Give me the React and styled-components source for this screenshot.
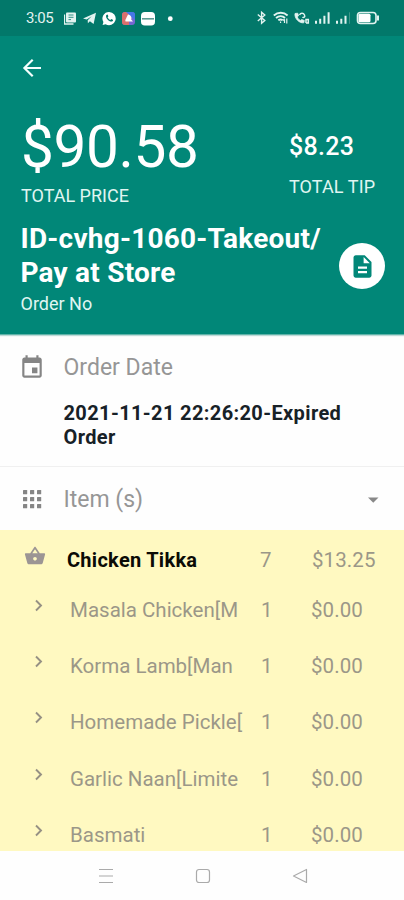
import React from 'react';
import styled, { createGlobalStyle } from 'styled-components';

const Global = createGlobalStyle`
  * { box-sizing: border-box; }
  body { margin: 0; background: #fefefe; font-family: Roboto, "Noto Sans", sans-serif; }
  svg { display: block; flex: none; }
`;

const Screen = styled.div`
  width: 404px;
  height: 900px;
  display: flex;
  flex-direction: column;
  overflow: hidden;
  background: #fefefe;
`;

const StatusBar = styled.div`
  height: 36px;
  flex: none;
  display: flex;
  align-items: center;
  justify-content: space-between;
  padding: 0 24px 0 26px;
  background: #02786a;
  color: #e2f3f0;
`;

const StatusGroup = styled.div`
  display: flex;
  align-items: center;
`;

const Clock = styled.span`
  width: 38px;
  font-size: 15px;
  line-height: 18px;
  letter-spacing: -0.4px;
`;

const Header = styled.header`
  height: 299px;
  flex: none;
  background: #018778;
  color: #fff;
  border-bottom: 1px solid #5fb3a9;
  box-shadow: 0 1px 1px rgba(0, 110, 98, 0.25);
`;

const AppBar = styled.div`
  height: 64px;
  padding: 20px 20px;
`;

const Totals = styled.div`
  display: grid;
  grid-template-columns: 268px 1fr;
  height: 122px;
  padding-left: 21px;
`;

const Total = styled.div`
  padding-top: ${(p) => p.$top}px;
`;

const TotalPrice = styled.div`
  font-size: 58.5px;
  line-height: 70px;
  letter-spacing: -0.4px;
`;

const TotalTip = styled.div`
  font-size: 25px;
  font-weight: 500;
  line-height: 32px;
  letter-spacing: 0.3px;
`;

const Caption = styled.div`
  margin-top: ${(p) => p.$gap || 0}px;
  font-size: 18px;
  line-height: 24px;
  letter-spacing: ${(p) => p.$track || 0}px;
  color: #e0f6f2;
`;

const OrderRow = styled.div`
  display: flex;
  justify-content: space-between;
  padding: 0 19px 0 20.5px;
`;

const OrderTitle = styled.h1`
  margin: 0;
  font-size: 28px;
  font-weight: 700;
  line-height: 34px;
  white-space: nowrap;
  letter-spacing: 0.22px;
`;

const ReceiptButton = styled.button`
  width: 46px;
  height: 46px;
  margin-top: 21px;
  padding: 0;
  border: 0;
  border-radius: 50%;
  display: flex;
  align-items: center;
  justify-content: center;
  background: #fff;
  color: #018778;
`;

const Section = styled.section`
  flex: none;
  height: ${(p) => p.$height}px;
  padding: 18px 19px 0 19px;
  border-bottom: ${(p) => (p.$line ? '1px solid #f0f0f0' : '0')};
`;

const SectionHead = styled.div`
  display: grid;
  grid-template-columns: 44.5px 1fr 22px;
  align-items: center;
  height: 28px;
  color: #858585;
`;

const SectionTitle = styled.div`
  padding-top: 1px;
  font-size: 23px;
  line-height: 28px;
  color: #969696;
`;

const DateValue = styled.div`
  margin: 20px 0 0 44.5px;
  font-size: 20px;
  font-weight: 700;
  line-height: 24px;
  letter-spacing: 0.37px;
  color: #172127;
  white-space: nowrap;
`;

const Items = styled.div`
  flex: none;
  height: 321px;
  overflow: hidden;
  background: #fff9c1;
  color: #9b9788;
`;

const ItemRow = styled.div`
  display: grid;
  grid-template-columns: ${(p) => (p.$main ? '67px 193px 52px 1fr' : '70px 191px 50px 1fr')};
  height: ${(p) => (p.$main ? 52 : 56.2)}px;
  padding-top: ${(p) => (p.$main ? 18 : 16)}px;
  font-size: 20.5px;
  line-height: 24px;
  white-space: nowrap;
`;

const ItemIcon = styled.div`
  padding-left: ${(p) => (p.$main ? 24 : 29)}px;
  margin-top: ${(p) => (p.$main ? -3 : -3)}px;
`;

const ItemName = styled.div`
  ${(p) => p.$main && 'font-weight: 700; font-size: 20px; letter-spacing: 0.28px; color: #0b0b06;'}
`;

const Cell = styled.div`
  letter-spacing: 0.1px;
`;

const NavBar = styled.nav`
  flex: 1;
  display: grid;
  grid-template-columns: repeat(3, 97px);
  justify-content: center;
  justify-items: center;
  align-items: center;
  padding-left: 1px;
  background: #fefefe;
  color: #aaa;
`;

const Notifications = () => (
  <svg width="150" height="16" viewBox="64 10 150 16" fill="currentColor">
    <path d="M64.500 14.500v9.500h9" fill="none" stroke="currentColor" strokeWidth="1.300" />
    <rect x="66" y="12.500" width="10" height="10" rx="1" />
    <path d="M68.500 15h5M68.500 17.300h5M68.500 19.600h2.500" stroke="#02786a" strokeWidth=".8" />
    <path d="M83 18.500 96 12.800 93.600 24l-3.700-2.700-2 2-.2-3 4-4-5 3.300z" />
    <path d="M109 12a6.600 6.600 0 1 1-3.400 12.200l-3 .8.800-3A6.600 6.600 0 0 1 109 12z" fill="#fff" />
    <path d="M106.300 14.900c-1.300 2.800 2.600 7 5.600 6.700.9-.1 1.500-1.500.9-1.900l-1.500-.8-1 1c-1.400-.6-2.200-1.500-2.700-2.700l.8-1-.8-1.600z" fill="#02786a" />
    <rect x="122" y="12" width="13" height="13" rx="3" fill="#7767d2" />
    <path d="M122 15v7a3 3 0 0 0 3 3h4V12h-4a3 3 0 0 0-3 3z" fill="#d9706c" />
    <path d="M126 12h6a3 3 0 0 1 3 3v5z" fill="#4577e8" />
    <path d="M128 14.500c3 .5 4 3 3.200 5l1.800 2h-7.500c-.8-2 1-3 1-4z" fill="#fff" />
    <rect x="141" y="12" width="14" height="13.500" rx="3.800" fill="#fff" />
    <path d="M142 18.800h12" stroke="#5d9c94" strokeWidth="1.600" />
    <circle cx="170.300" cy="18.700" r="2.400" fill="#fff" />
  </svg>
);

const Connectivity = () => (
  <svg width="124" height="16" viewBox="256 11 124 16" fill="none" stroke="currentColor" strokeWidth="1.400">
    <path d="m257.800 15.500 7 6-3.200 2.800v-11l3.200 2.700-7 6" />
    <path d="M273.800 16.500c4.200-3.600 9.800-3.600 13.800 0M276 19c2.800-2.300 6.500-2.300 9 0M278.300 21.300c1.500-1 3-1 4.400 0" strokeWidth="1.900" />
    <path d="m280.500 22.500.1 1.500M284.500 24v-3.500M284.500 20l-1.300 1.500M286.800 19.500v5" strokeWidth="1.200" />
    <path d="M295 14.500c-.8 4.500 4 10 8.800 9.300l.5-2.300-2.600-1-1.400 1c-1.600-1-2.500-2.200-3-3.600l1.300-1.200-.9-2.500z" fill="currentColor" strokeWidth=".8" />
    <path d="M299.500 16c1-2.300 4-2.300 5 0s-1 3-2 2M306 24v-3.500h2.300V24H306" strokeWidth="1.500" />
    <path d="M316 24.800v-3M320.200 24.800v-5M324.400 24.800v-8M328.600 24.800v-11.500" strokeWidth="2" />
    <path d="M337 24.800v-3M341.300 24.800v-5M345.500 24.800v-8" strokeWidth="2" />
    <path d="M349.500 24.800v-11.500" stroke="#3f9589" strokeWidth="1" />
    <rect x="357.500" y="13.500" width="18.500" height="11" rx="3" strokeWidth="1.600" />
    <rect x="358.500" y="14.800" width="12" height="8.400" rx="1.500" fill="#fff" stroke="none" />
    <path d="M378 16.500v5" strokeWidth="2" />
  </svg>
);

const BackIcon = () => (
  <svg width="24" height="24" viewBox="0 0 24 24" fill="none" stroke="#f4fffd" strokeWidth="2.200">
    <path d="M21 12H4.500M12.700 3.700 4.400 12l8.300 8.300" />
  </svg>
);

const DocIcon = () => (
  <svg width="27" height="27" viewBox="0 0 24 24" fill="currentColor">
    <path d="M14 2H6c-1.100 0-1.990.9-1.990 2L4 20c0 1.100.89 2 1.990 2H18c1.100 0 2-.9 2-2V8l-6-6zm2 16H8v-2h8v2zm0-4H8v-2h8v2zm-3-5V3.500L18.500 9H13z" />
  </svg>
);

const CalendarIcon = () => (
  <svg width="26" height="27" viewBox="0 0 24 24" fill="currentColor" preserveAspectRatio="none">
    <path d="M17 12h-5v5h5v-5zM16 1v2H8V1H6v2H5c-1.110 0-1.990.9-1.990 2L3 19c0 1.100.89 2 2 2h14c1.100 0 2-.9 2-2V5c0-1.100-.9-2-2-2h-1V1h-2zm3 18H5V8h14v11z" />
  </svg>
);

const GridIcon = () => (
  <svg width="27" height="27" viewBox="0 0 27 27" fill="currentColor">
    {[4, 11, 18].map((y) => [4, 11, 18].map((x) => <rect key={`${x}-${y}`} x={x} y={y} width="4.200" height="4.200" rx=".5" />))}
  </svg>
);

const CaretIcon = () => (
  <svg width="22" height="22" viewBox="0 0 22 22" fill="#888">
    <path d="M5 8.500h10.500l-5.250 5.300z" />
  </svg>
);

const BasketIcon = () => (
  <svg width="22" height="22" viewBox="0 0 24 24" fill="#9c9594">
    <path d="M17.210 9l-4.380-6.560c-.19-.28-.51-.42-.83-.42-.32 0-.64.14-.83.43L6.790 9H2c-.55 0-1 .45-1 1 0 .09.010.18.040.27l2.540 9.270c.23.840 1 1.460 1.920 1.460h13c.92 0 1.690-.62 1.930-1.460l2.540-9.270L23 10c0-.55-.45-1-1-1h-4.790zM9 9l3-4.400L15 9H9zm3 8c-1.100 0-2-.9-2-2s.9-2 2-2 2 .9 2 2-.9 2-2 2z" />
  </svg>
);

const ChevronIcon = () => (
  <svg width="20" height="20" viewBox="0 0 20 20" fill="none" stroke="#969184" strokeWidth="1.900">
    <path d="m7 5.500 5 5-5 5" />
  </svg>
);

const extras = [
  'Masala Chicken[M',
  'Korma Lamb[Man',
  'Homemade Pickle[',
  'Garlic Naan[Limite',
  'Basmati',
];

export default function App() {
  return (
    <Screen>
      <Global />
      <StatusBar>
        <StatusGroup>
          <Clock>3:05</Clock>
          <Notifications />
        </StatusGroup>
        <Connectivity />
      </StatusBar>
      <Header>
        <AppBar>
          <BackIcon />
        </AppBar>
        <Totals>
          <Total $top={12}>
            <TotalPrice>$90.58</TotalPrice>
            <Caption $gap={2}>TOTAL PRICE</Caption>
          </Total>
          <Total $top={31}>
            <TotalTip>$8.23</TotalTip>
            <Caption $gap={12} $track={0.1}>TOTAL TIP</Caption>
          </Total>
        </Totals>
        <OrderRow>
          <div>
            <OrderTitle>
              ID-cvhg-1060-Takeout/
              <br />
              Pay at Store
            </OrderTitle>
            <Caption $gap={2}>Order No</Caption>
          </div>
          <ReceiptButton aria-label="Receipt">
            <DocIcon />
          </ReceiptButton>
        </OrderRow>
      </Header>
      <Section $height={132} $line>
        <SectionHead>
          <CalendarIcon />
          <SectionTitle>Order Date</SectionTitle>
        </SectionHead>
        <DateValue>
          2021-11-21 22:26:20-Expired
          <br />
          Order
        </DateValue>
      </Section>
      <Section $height={63}>
        <SectionHead>
          <GridIcon />
          <SectionTitle>Item (s)</SectionTitle>
          <CaretIcon />
        </SectionHead>
      </Section>
      <Items>
        <ItemRow $main>
          <ItemIcon $main>
            <BasketIcon />
          </ItemIcon>
          <ItemName $main>Chicken Tikka</ItemName>
          <Cell>7</Cell>
          <Cell>$13.25</Cell>
        </ItemRow>
        {extras.map((name) => (
          <ItemRow key={name}>
            <ItemIcon>
              <ChevronIcon />
            </ItemIcon>
            <ItemName>{name}</ItemName>
            <Cell>1</Cell>
            <Cell>$0.00</Cell>
          </ItemRow>
        ))}
      </Items>
      <NavBar>
        <svg width="16" height="16" viewBox="0 0 16 16" stroke="currentColor" strokeWidth="1.200">
          <path d="M1 1.500h14M1 8h14M1 14.500h14" />
        </svg>
        <svg width="16" height="16" viewBox="0 0 16 16" fill="none" stroke="currentColor" strokeWidth="1.200">
          <rect x="1.500" y="1.500" width="13" height="13" rx="2.500" />
        </svg>
        <svg width="16" height="16" viewBox="0 0 16 16" fill="none" stroke="currentColor" strokeWidth="1.200" strokeLinejoin="round">
          <path d="M14.500 1.500v13L1.500 8z" />
        </svg>
      </NavBar>
    </Screen>
  );
}
